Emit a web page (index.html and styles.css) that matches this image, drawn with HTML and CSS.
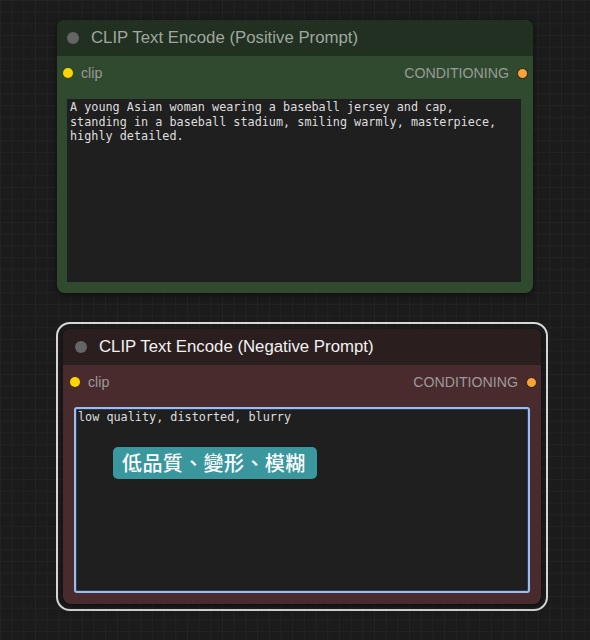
FILE: index.html
```html
<!DOCTYPE html>
<html>
<head>
<meta charset="utf-8">
<link rel="stylesheet" href="styles.css">
</head>
<body>
<div class="canvas">
  <div class="node node-pos">
    <div class="title">
      <span class="title-dot"></span>
      <span class="title-text">CLIP Text Encode (Positive Prompt)</span>
    </div>
    <div class="node-body">
      <div class="slots">
        <div class="slot"><span class="dot dot-in"></span><span class="slot-label">clip</span></div>
        <div class="slot"><span class="slot-label">CONDITIONING</span><span class="dot dot-out"></span></div>
      </div>
      <div class="prompt">A young Asian woman wearing a baseball jersey and cap,
standing in a baseball stadium, smiling warmly, masterpiece,
highly detailed.</div>
    </div>
  </div>

  <div class="selected">
    <div class="node node-neg">
      <div class="title">
        <span class="title-dot"></span>
        <span class="title-text">CLIP Text Encode (Negative Prompt)</span>
      </div>
      <div class="node-body">
        <div class="slots">
          <div class="slot"><span class="dot dot-in"></span><span class="slot-label">clip</span></div>
          <div class="slot"><span class="slot-label">CONDITIONING</span><span class="dot dot-out"></span></div>
        </div>
        <div class="prompt focused">low quality, distorted, blurry
          <span class="badge">低品質、變形、模糊</span>
        </div>
      </div>
    </div>
  </div>
</div>
</body>
</html>
```

FILE: styles.css
```css
html, body {
  margin: 0;
  padding: 0;
}
body {
  width: 590px;
  height: 640px;
  overflow: hidden;
  background-color: #1b1b1b;
  background-image:
    linear-gradient(to right, #222222 1px, transparent 1px),
    linear-gradient(to bottom, #222222 1px, transparent 1px);
  background-size: 11.7px 11.7px;
  font-family: "Liberation Sans", Arial, sans-serif;
}
.canvas {
  position: relative;
  width: 590px;
  height: 640px;
}
.node {
  border-radius: 8px;
  overflow: hidden;
  box-shadow: 0 2px 6px rgba(0,0,0,0.5);
  display: flex;
  flex-direction: column;
}
.node-pos {
  position: absolute;
  left: 57px;
  top: 20px;
  width: 476px;
  height: 273px;
  background: #2f4a2e;
}
.node-pos .title {
  background: #213021;
}
.node-pos .title-text {
  color: #9fa79e;
}
.selected {
  position: absolute;
  left: 56px;
  top: 322px;
  width: 478px;
  height: 275px;
  padding: 5px;
  border: 2px solid #d8d8d8;
  border-radius: 14px;
}
.node-neg {
  width: 478px;
  height: 275px;
  background: #4a2b2d;
}
.node-neg .title {
  background: #2b1e1f;
  padding-left: 12px;
}
.node-neg .title-text {
  color: #f2f2f2;
}
.title {
  height: 36px;
  flex: none;
  display: flex;
  align-items: center;
  padding-left: 10px;
  gap: 12px;
}
.title-dot {
  width: 12px;
  height: 12px;
  border-radius: 50%;
  background: #656565;
}
.title-text {
  font-size: 16.8px;
}
.node-body {
  flex: 1;
  display: flex;
  flex-direction: column;
  padding: 8px 12px 11px 10px;
}
.node-neg .node-body {
  padding: 8px 11px 11px 11px;
}
.slots {
  height: 18px;
  display: flex;
  justify-content: space-between;
  align-items: center;
  margin-left: -4px;
  margin-right: -7px;
}
.slot {
  display: flex;
  align-items: center;
  gap: 8px;
}
.slot-label {
  color: #9a9a9a;
  font-size: 14.2px;
}
.dot {
  width: 10px;
  height: 10px;
  border-radius: 50%;
}
.dot-in {
  background: #ffd500;
}
.dot-out {
  width: 9px;
  height: 9px;
  background: #f6a43a;
  border: 1px solid #2a2010;
}
.prompt {
  position: relative;
  flex: 1;
  margin-top: 17px;
  background: #1f1f1f;
  color: #dedede;
  font-family: "DejaVu Sans Mono", monospace;
  font-size: 11.8px;
  line-height: 14.6px;
  padding: 1px 3px;
  white-space: pre-wrap;
}
.prompt.focused {
  border: 2px solid #9bbdf0;
  border-radius: 3px;
  box-shadow: inset 0 0 0 1px #2b3b55;
  padding: 1px 2px;
  margin-top: 16px;
  white-space: pre;
}
.badge {
  position: absolute;
  left: 37px;
  top: 38px;
  width: 204px;
  height: 32px;
  box-sizing: border-box;
  border-radius: 5px;
  background: #3b979e;
  color: #ffffff;
  font-family: "Noto Sans CJK TC", "Noto Sans CJK SC", sans-serif;
  font-size: 20px;
  font-weight: 500;
  line-height: 32px;
  padding-left: 9px;
  letter-spacing: 0.4px;
}
```
